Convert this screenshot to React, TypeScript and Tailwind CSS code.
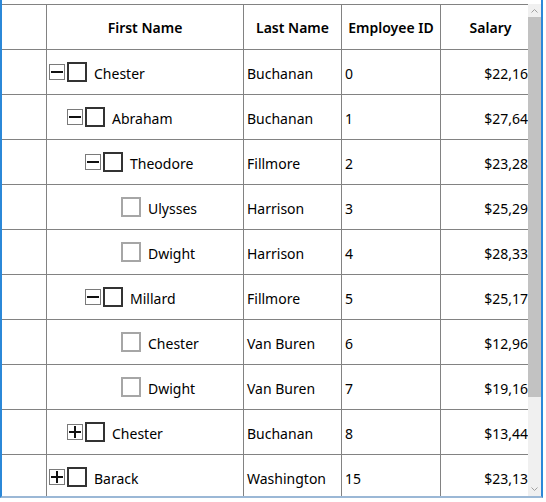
import React from 'react';

type Employee = {
  first: string;
  last: string;
  id: number;
  salary: string;
  level: number;
  // undefined = leaf, true = expanded, false = collapsed
  expanded?: boolean;
};

const rows: Employee[] = [
  { first: 'Chester', last: 'Buchanan', id: 0, salary: '$22,164', level: 0, expanded: true },
  { first: 'Abraham', last: 'Buchanan', id: 1, salary: '$27,648', level: 1, expanded: true },
  { first: 'Theodore', last: 'Fillmore', id: 2, salary: '$23,285', level: 2, expanded: true },
  { first: 'Ulysses', last: 'Harrison', id: 3, salary: '$25,291', level: 3 },
  { first: 'Dwight', last: 'Harrison', id: 4, salary: '$28,330', level: 3 },
  { first: 'Millard', last: 'Fillmore', id: 5, salary: '$25,172', level: 2, expanded: true },
  { first: 'Chester', last: 'Van Buren', id: 6, salary: '$12,967', level: 3 },
  { first: 'Dwight', last: 'Van Buren', id: 7, salary: '$19,163', level: 3 },
  { first: 'Chester', last: 'Buchanan', id: 8, salary: '$13,449', level: 1, expanded: false },
  { first: 'Barack', last: 'Washington', id: 15, salary: '$23,131', level: 0, expanded: false },
];

const cols = 'grid grid-cols-[45px_197px_98px_99px_100px] w-[539px]';
const cell = 'border-r border-b border-[#828282] flex items-center';

const Expander = ({ open }: { open: boolean }) => (
  <svg width="16" height="16" viewBox="0 0 16 16" className="shrink-0">
    <rect x="0.5" y="0.5" width="15" height="15" fill="white" stroke="#7a7a7a" />
    <rect x="2" y="7" width="12" height="2" fill="#111" />
    {!open && <rect x="7" y="2" width="2" height="12" fill="#111" />}
  </svg>
);

const TreeCell = ({ row }: { row: Employee }) => {
  const leaf = row.expanded === undefined;
  return (
    <div className={cell}>
      <div className="flex items-center" style={{ paddingLeft: 2 + row.level * 18 }}>
        {leaf ? <div className="w-4 shrink-0" /> : <Expander open={!!row.expanded} />}
        <div
          className={`ml-[2px] w-5 h-5 shrink-0 border-2 bg-white ${
            leaf ? 'border-[#a6a6a6]' : 'border-[#333333]'
          }`}
        />
        <span className="ml-[7px] pt-[2px]">{row.first}</span>
      </div>
    </div>
  );
};

export default function App() {
  return (
    <div
      className="w-[546px] h-[502px] bg-white text-[14px] text-black"
      style={{ fontFamily: '"Segoe UI", "Noto Sans", "Open Sans", sans-serif' }}
    >
      <div className="w-[543px] h-[498px] flex flex-col border-l-2 border-r-2 border-b-2 border-l-[#2b88d8] border-r-[#2b88d8] border-b-[#9bb8d6]">
        <div className="h-[4px] shrink-0" />
        <div className="flex flex-1 min-h-0">
          <div className="w-[526px] overflow-hidden">
            <div className={`${cols} border-t border-[#828282]`}>
              <div className={`${cell} h-[45px]`} />
              {['First Name', 'Last Name', 'Employee ID', 'Salary'].map((h) => (
                <div key={h} className={`${cell} h-[45px] justify-center font-semibold`}>
                  {h}
                </div>
              ))}
            </div>
            {rows.map((r, i) => (
              <div key={i} className={cols}>
                <div className={`${cell} h-[45px]`} />
                <TreeCell row={r} />
                <div className={`${cell} pl-[3px] pt-[2px]`}>{r.last}</div>
                <div className={`${cell} pl-[3px] pt-[2px]`}>{r.id}</div>
                <div className={`${cell} justify-end pr-[4px] pt-[2px]`}>{r.salary}</div>
              </div>
            ))}
          </div>
          {/* vertical scrollbar */}
          <div className="w-[13px] bg-[#f0f0f0] flex flex-col items-center">
            <svg width="9" height="13" viewBox="0 0 9 13" className="shrink-0">
              <path d="M1.5 8.5 L4.5 5.5 L7.5 8.5" fill="none" stroke="#a0a0a0" strokeWidth="1" />
            </svg>
            <div className="w-full h-[380px] bg-[#c2c2c2]" />
            <div className="flex-1" />
            <svg width="9" height="13" viewBox="0 0 9 13" className="shrink-0">
              <path d="M1.5 4.5 L4.5 7.5 L7.5 4.5" fill="none" stroke="#a0a0a0" strokeWidth="1" />
            </svg>
          </div>
        </div>
      </div>
    </div>
  );
}
